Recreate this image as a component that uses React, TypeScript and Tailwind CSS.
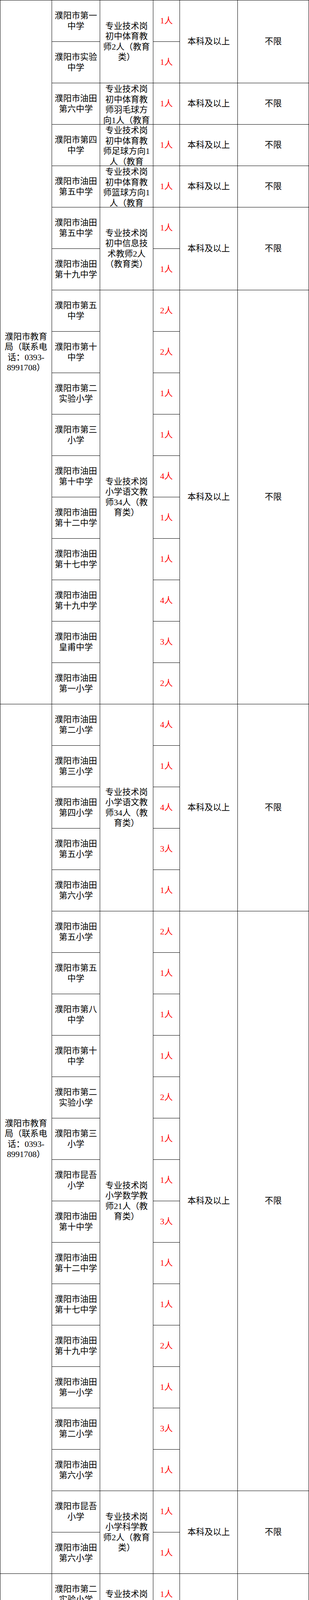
import clsx from 'clsx'

type Entry = [number, string]

const EDU_BUREAU = '濮阳市教育\n局（联系电\n话：0393-\n8991708）'
const COLLEGE = '濮阳石油化\n工职业技术\n学院（联系\n电话：\n0393-\n4820324）'
const COLLEGE_UNIT = '濮阳石油化\n工职业技术\n学院\n（37人）'
const CHINESE_34 = '专业技术岗\n小学语文教\n师34人（教\n育类）'
const MASTER = '普通高等教育\n硕士研究生及\n以上'

const SCHOOLS = [
  '濮阳市第一中学', '濮阳市实验中学', '濮阳市油田第六中学', '濮阳市第四中学', '濮阳市油田第五中学',
  '濮阳市油田第五中学', '濮阳市油田第十九中学', '濮阳市第五中学', '濮阳市第十中学', '濮阳市第二实验小学',
  '濮阳市第三小学', '濮阳市油田第十中学', '濮阳市油田第十二中学', '濮阳市油田第十七中学', '濮阳市油田第十九中学',
  '濮阳市油田皇甫中学', '濮阳市油田第一小学', '濮阳市油田第二小学', '濮阳市油田第三小学', '濮阳市油田第四小学',
  '濮阳市油田第五小学', '濮阳市油田第六小学', '濮阳市油田第五小学', '濮阳市第五中学', '濮阳市第八中学',
  '濮阳市第十中学', '濮阳市第二实验小学', '濮阳市第三小学', '濮阳市昆吾小学', '濮阳市油田第十中学',
  '濮阳市油田第十二中学', '濮阳市油田第十七中学', '濮阳市油田第十九中学', '濮阳市油田第一小学', '濮阳市油田第二小学',
  '濮阳市油田第六小学', '濮阳市昆吾小学', '濮阳市油田第六小学', '濮阳市第二实验小学', '濮阳市油田第十中学',
  '濮阳市实验小学', '濮阳市油田第十二中学', '濮阳市油田第十九中学', '濮阳市油田第十中学', '濮阳市油田第十中学',
  '濮阳市昆吾小学', '濮阳市油田第十九中学', '濮阳市昆吾小学', '濮阳市油田第十九中学', '濮阳市油田第六小学',
  '濮阳市昆吾小学', '濮阳市市直幼儿园', '濮阳市实验幼儿园', '濮阳市第一中学',
]

// 岗位列：跨行数 + 文本（按原表换行）
const POSTS: Entry[] = [
  [2, '专业技术岗\n初中体育教\n师2人（教育\n类）'],
  [1, '专业技术岗\n初中体育教\n师羽毛球方\n向1人（教育\n类）'],
  [1, '专业技术岗\n初中体育教\n师足球方向1\n人（教育\n类）'],
  [1, '专业技术岗\n初中体育教\n师篮球方向1\n人（教育\n类）'],
  [2, '专业技术岗\n初中信息技\n术教师2人\n（教育类）'],
  [10, CHINESE_34],
  [5, CHINESE_34],
  [14, '专业技术岗\n小学数学教\n师21人（教\n育类）'],
  [2, '专业技术岗\n小学科学教\n师2人（教育\n类）'],
  [2, '专业技术岗\n小学音乐教\n师舞蹈方向2\n人（教育\n类）'],
  [3, '专业技术岗\n小学音乐教\n师3人（教育\n类）'],
  [1, '专业技术岗\n小学体育教\n师武术、太\n极方向1人\n（教育类）'],
  [1, '专业技术岗\n小学体育教\n师足球方向1\n人（教育\n类）'],
  [2, '专业技术岗\n小学体育教\n师3人（教育\n类）'],
  [3, '专业技术岗\n小学美术教\n师3人（教育\n类）'],
  [1, '专业技术岗\n小学信息技\n术教师1人\n（教育类）'],
  [2, '专业技术岗\n学前教育教\n师5人（教育\n类）'],
  [1, '专业技术岗\n（卫生类）'],
]

const COUNTS = [
  1, 1, 1, 1, 1, 1, 1, 2, 2, 1, 1, 4, 1, 1, 4, 3, 2,
  4, 1, 4, 3, 1,
  2, 1, 1, 1, 2, 1, 1, 3, 1, 1, 2, 1, 3, 1,
  1, 1,
  1, 1, 1, 1, 1, 1, 1, 2, 1, 1, 1, 1, 1, 1, 4, 1,
  5, 5, 5, 6, 2, 3, 1, 1, 1, 1, 1, 1, 1, 1, 1, 1, 1,
]

const MAJORS = [
  '学科教学(思政)', '学科教学（语文）', '学科教学（数学）', '学科教学（英语）', '学科教学（物理）',
  '体育教学', '运动训练', '数学媒体与交互设\n计研究', '计算机科学与技术', '电子商务',
  '机械制造及其自动\n化', '油气井工程', '油气井开发工程', '油气储运工程', '电气工程',
  '化学工程', '高分子材料',
]

const COL_START = ['col-start-1', 'col-start-2', 'col-start-3', 'col-start-4', 'col-start-5', 'col-start-6']
const ROW_SPAN: Record<number, string> = {
  1: 'row-span-1',
  2: 'row-span-2',
  3: 'row-span-3',
  5: 'row-span-5',
  10: 'row-span-10',
  14: 'row-span-14',
  16: 'row-span-16',
  17: 'row-span-17',
  21: 'row-span-21',
}

const columns: { entries: Entry[]; red?: boolean }[] = [
  {
    entries: [
      [17, EDU_BUREAU],
      [21, EDU_BUREAU],
      [16, EDU_BUREAU],
      [17, COLLEGE],
    ],
  },
  {
    entries: [
      ...SCHOOLS.map((s): Entry => [1, s.slice(0, 5) + '\n' + s.slice(5)]),
      [17, COLLEGE_UNIT],
    ],
  },
  { entries: [...POSTS, ...MAJORS.map((): Entry => [1, '专业技术岗\n（教育类）'])] },
  { entries: COUNTS.map((n): Entry => [1, `${n}人`]), red: true },
  { entries: [...POSTS.map(([span]): Entry => [span, '本科及以上']), ...MAJORS.map((): Entry => [1, MASTER])] },
  { entries: [...POSTS.map(([span]): Entry => [span, '不限']), ...MAJORS.map((m): Entry => [1, m])] },
]

type CellData = { col: number; span: number; text: string; red?: boolean }

function buildCells() {
  const starts = columns.map((c) => {
    const map = new Map<number, Entry>()
    let row = 0
    c.entries.forEach((e) => {
      map.set(row, e)
      row += e[0]
    })
    return map
  })

  // 按行优先顺序输出，网格自动排布即与原表一致
  const cells: CellData[] = []
  for (let row = 0; row < 71; row++) {
    columns.forEach((c, col) => {
      const entry = starts[col].get(row)
      if (entry) cells.push({ col, span: entry[0], text: entry[1], red: c.red })
    })
  }
  return cells
}

function Cell({ cell }: { cell: CellData }) {
  return (
    <div
      className={clsx(
        'flex flex-col items-center overflow-hidden bg-white px-[2px] py-[2px] text-center whitespace-pre-line [justify-content:safe_center]',
        COL_START[cell.col],
        ROW_SPAN[cell.span],
        cell.red ? 'text-[#ff0000]' : 'text-black',
      )}
    >
      {cell.text}
    </div>
  )
}

export default function App() {
  const cells = buildCells()

  return (
    <div className="w-[790px] bg-white font-['Liberation_Serif','Noto_Sans_CJK_SC',serif] text-[21.7px] leading-[26.5px]">
      <div className="grid grid-cols-[131px_122px_135px_67px_147px_181px] auto-rows-[105px] gap-px bg-black p-px">
        {cells.map((cell, i) => (
          <Cell key={i} cell={cell} />
        ))}
      </div>
    </div>
  )
}
